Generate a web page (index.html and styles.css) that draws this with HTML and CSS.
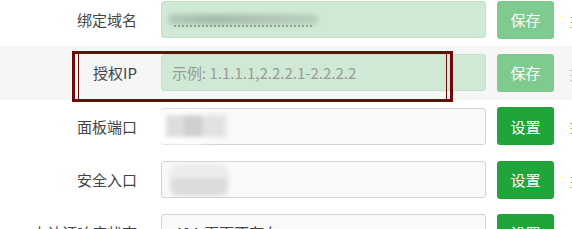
FILE: index.html
```html
<!DOCTYPE html>
<html lang="zh-CN">
<head>
<meta charset="utf-8">
<link rel="stylesheet" href="styles.css">
</head>
<body>
<div class="form">
  <div class="row">
    <label class="label">绑定域名</label>
    <div class="field field-green">
      <span class="blur blur-domain"></span>
      <span class="blur-dots"></span>
    </div>
    <button class="btn btn-disabled">保存</button>
    <span class="hint hint-orange">提示</span>
  </div>
  <div class="row row-gray">
    <label class="label">授权IP</label>
    <div class="field field-green"><span class="placeholder">示例: 1.1.1.1,2.2.2.1-2.2.2.2</span></div>
    <button class="btn btn-disabled">保存</button>
    <span class="hint hint-gray">提示</span>
    <div class="mark"><div class="mark-inner"></div></div>
  </div>
  <div class="row">
    <label class="label">面板端口</label>
    <div class="field">
      <span class="blur blur-port"></span>
    </div>
    <button class="btn">设置</button>
    <span class="hint hint-red">提示</span>
    <span class="blur blur-white"></span>
  </div>
  <div class="row">
    <label class="label">安全入口</label>
    <div class="field">
      <span class="blur blur-entry"></span>
    </div>
    <button class="btn">设置</button>
    <span class="hint hint-orange">提示</span>
  </div>
  <div class="row">
    <label class="label">未认证响应状态</label>
    <div class="field"><span class="value">404-页面不存在</span></div>
    <button class="btn">设置</button>
    <span class="hint hint-orange">提示</span>
  </div>
</div>
</body>
</html>
```

FILE: styles.css
```css
html, body {
  margin: 0;
  padding: 0;
  background: #ffffff;
  overflow: hidden;
  width: 572px;
  height: 229px;
}
body {
  font-family: "Noto Sans CJK SC", "Noto Sans", sans-serif;
  font-size: 15px;
  color: #444;
}
.form {
  margin-top: -7px;
}
.row {
  position: relative;
  display: flex;
  align-items: center;
  height: 53.3px;
  white-space: nowrap;
}
.row-gray {
  background: #f6f6f6;
}
.label {
  width: 137px;
  text-align: right;
  margin-right: 24px;
  color: #444;
  flex: none;
}
.field {
  position: relative;
  box-sizing: border-box;
  width: 325px;
  height: 37px;
  border: 1px solid #d2d2d2;
  border-radius: 3px;
  background: #f9f9f9;
  display: flex;
  align-items: center;
  padding: 0 10px;
  overflow: hidden;
  flex: none;
}
.field-green {
  background: #cfe9d4;
  border-color: #c4e0c9;
}
.placeholder {
  color: #999;
}
.value {
  color: #444;
  padding-left: 2px;
}
.btn {
  box-sizing: border-box;
  margin-left: 11px;
  width: 57px;
  height: 38px;
  border: none;
  border-radius: 3px;
  background: #20a53a;
  color: #fff;
  font-family: inherit;
  font-size: 15px;
  padding: 0;
  flex: none;
}
.btn-disabled {
  background: #7fca8e;
}
.hint {
  margin-left: 16px;
  font-size: 14px;
}
.hint-orange { color: #f0a030; }
.hint-gray { color: #aaa; }
.hint-red { color: #e8793e; }
.blur {
  position: absolute;
  filter: blur(2px);
}
.blur-domain {
  left: 6px;
  top: 12px;
  width: 150px;
  height: 11px;
  border-radius: 6px;
  background: linear-gradient(90deg, #b5cbb9 0%, #a6bcaa 30%, #b0c5b4 60%, #bad0be 100%);
}
.blur-dots {
  position: absolute;
  left: 12px;
  top: 23px;
  width: 140px;
  height: 2px;
  background: repeating-linear-gradient(90deg, #6d7f70 0 2px, transparent 2px 4px);
  opacity: .6;
}
.blur-port {
  z-index: 2;
  left: 4px;
  top: 6px;
  width: 60px;
  height: 22px;
  background: linear-gradient(90deg, #dedede 0 30%, #cfcfcf 30% 60%, #e2e2e2 60% 100%);
}
.blur-white {
  z-index: 1;
  left: 144px;
  top: 10px;
  width: 70px;
  height: 34px;
  border-radius: 17px;
  background: #ffffff;
  filter: blur(3px);
}
.blur-entry {
  left: 8px;
  top: 2px;
  width: 58px;
  height: 32px;
  border-radius: 8px;
  background: linear-gradient(180deg, #ececec 0 45%, #dcdcdc 45% 100%);
}
.mark {
  position: absolute;
  left: 72px;
  top: 5px;
  width: 381px;
  height: 51px;
  box-sizing: border-box;
  border: 3px solid #6e0a0a;
}
.mark-inner {
  position: absolute;
  left: 3px;
  right: 3px;
  top: 0;
  bottom: 0;
  border-left: 1px solid #6e0a0a;
  border-right: 1px solid #6e0a0a;
}
```
